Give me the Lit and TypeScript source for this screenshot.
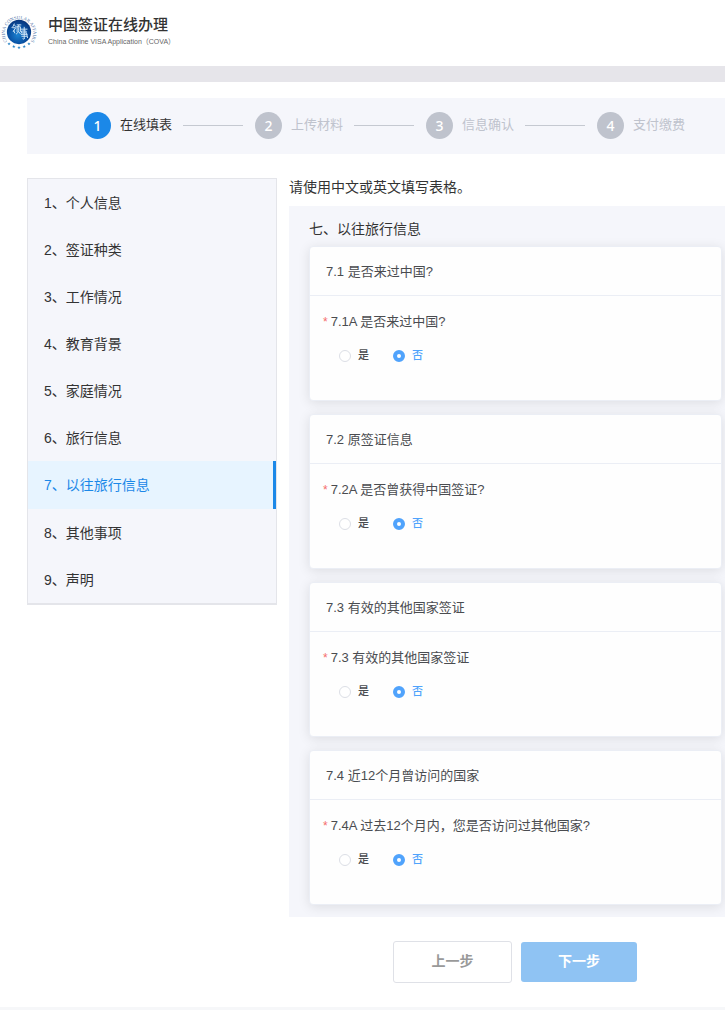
import { LitElement, html, css, svg } from "lit";
import { customElement, property, state } from "lit/decorators.js";
import { classMap } from "lit/directives/class-map.js";

const STEPS = ["在线填表", "上传材料", "信息确认", "支付缴费"];

const SECTIONS = [
  "个人信息", "签证种类", "工作情况", "教育背景", "家庭情况",
  "旅行信息", "以往旅行信息", "其他事项", "声明",
];

const QUESTIONS = [
  { id: "q1", title: "7.1 是否来过中国?", label: "7.1A 是否来过中国?" },
  { id: "q2", title: "7.2 原签证信息", label: "7.2A 是否曾获得中国签证?" },
  { id: "q3", title: "7.3 有效的其他国家签证", label: "7.3 有效的其他国家签证" },
  { id: "q4", title: "7.4 近12个月曾访问的国家", label: "7.4A 过去12个月内，您是否访问过其他国家?" },
];

const star = (x: number, y: number) => svg`
  <path fill="#2b86c8" transform="translate(${x} ${y}) scale(1.2)"
    d="M0-1.5 .4-.5 1.5-.5 .6.2 .9 1.3 0 .6-.9 1.3-.6.2-1.5-.5-.4-.5Z"/>`;

@customElement("cova-header")
class CovaHeader extends LitElement {
  static styles = css`
    :host { display: block; }
    .bar {
      display: flex;
      align-items: center;
      gap: 11px;
      height: 64px;
      padding: 0 1px 2px;
      border-bottom: 16px solid #e6e5ea;
    }
    .logo { width: 36px; height: 36px; flex: none; }
    .ring { font: 5px "Liberation Serif", serif; fill: #4a6fa5; }
    .name { margin: 0; font-size: 15px; line-height: 20px; font-weight: 500; color: #333; }
    .sub { margin: 0; font: 7px/14px "Liberation Sans", "Noto Sans CJK SC", sans-serif; color: #666; white-space: nowrap; }
  `;

  render() {
    return html`
      <header class="bar">
        <svg class="logo" viewBox="-1 -1 38 38" role="img" aria-label="领事">
          <defs>
            <radialGradient id="globe" cx="45%" cy="62%" r="62%">
              <stop offset="0" stop-color="#1d82d0" />
              <stop offset=".55" stop-color="#0b56a8" />
              <stop offset="1" stop-color="#07347b" />
            </radialGradient>
            <path id="arc" d="M5.200 27.200A15 15 0 1 1 30.800 27.200" />
          </defs>
          <circle cx="18" cy="18" r="12.800" fill="url(#globe)" />
          <text class="ring" text-anchor="middle"><textPath href="#arc" startOffset="50%">CHINA CONSULAR AFFAIRS</textPath></text>
          <g fill="none" stroke="#d5e9f9" stroke-linecap="round">
            <path d="M13 9.500c-.5 2-1.500 3-2.500 4M13 10.500l2 2M11.500 13.500h3l-2.500 4M12.500 16.500l1 2.500M16 10.500h4M18 10.500l-1 2M16 12.500h3.500v5M16 12.500v5M17.700 13.500v3c-.5 2-1.500 3-2.500 3.500M18 18l1.500 2" />
            <path d="M20 15h6.500M23.500 13v12M21 17h4.500v2h-4.500zM20.500 20.500h6M21 22.500h5M23.500 25c-.5.800-1 .800-1.500.300M26 19.500l1 4.500" />
          </g>
          ${star(7.5, 30.5)}${star(12.5, 33.3)}${star(18, 34.5)}${star(23.5, 33.3)}${star(28.5, 30.5)}
        </svg>
        <div>
          <h1 class="name">中国签证在线办理</h1>
          <p class="sub">China Online VISA Application（COVA）</p>
        </div>
      </header>
    `;
  }
}

@customElement("cova-steps")
class CovaSteps extends LitElement {
  static styles = css`
    :host { display: block; }
    .steps {
      display: flex;
      align-items: center;
      height: 54px;
      margin: 0;
      padding: 0 40px 2px 57px;
      list-style: none;
      background: #f5f6fb;
    }
    .step { display: flex; flex: 1 1 auto; align-items: center; gap: 9px; color: #bfc3cd; font-size: 13px; white-space: nowrap; }
    .step:last-child { flex: none; }
    .step::after { content: ""; flex: 1; height: 1px; margin: 0 12px 0 2px; background: #c5c9d1; }
    .step:last-child::after { display: none; }
    .dot {
      display: flex;
      align-items: center;
      justify-content: center;
      width: 27px;
      height: 27px;
      border-radius: 50%;
      background: #bfc3cd;
      color: #fff;
      font: 500 14px/27px "Noto Sans", sans-serif;
    }
    .current { color: #333; }
    .current .dot { background: #1b88e8; }
  `;

  render() {
    return html`
      <ol class="steps">
        ${STEPS.map((s, i) => html`
          <li class=${classMap({ step: true, current: i === 0 })}>
            <span class="dot">${i + 1}</span><span>${s}</span>
          </li>`)}
      </ol>
    `;
  }
}

@customElement("cova-question")
class CovaQuestion extends LitElement {
  @property() name = "";
  @property() heading = "";
  @property() label = "";
  @state() private answer = "否";

  static styles = css`
    :host { display: block; }
    .card {
      border: 1px solid #ebeef5;
      border-radius: 4px;
      background: #fefefe;
      box-shadow: 0 2px 12px rgba(0, 0, 0, 0.1);
      color: #4a4c50;
      font-size: 13px;
      line-height: 20px;
    }
    .heading { margin: 0; padding: 15px 16px 13px; border-bottom: 1px solid #ebeef5; font-size: 13px; font-weight: 400; }
    .group { margin: 0; padding: 16px 13px 35px; border: 0; }
    .label { float: left; width: 100%; padding: 0; }
    .star { margin-right: 3px; color: #f56c6c; font-size: 12px; }
    .options { clear: both; display: flex; gap: 24px; padding: 13px 0 0 16px; }
    .option { display: flex; align-items: center; gap: 7px; font-size: 11px; font-weight: 500; }
    .radio {
      appearance: none;
      box-sizing: border-box;
      width: 12px;
      height: 12px;
      margin: 1px 0 0;
      border: 1px solid #dcdfe6;
      border-radius: 50%;
      background: #fff;
    }
    .radio:checked { border: 4px solid #50a3fc; }
    .chosen { color: #50a3fc; }
  `;

  render() {
    return html`
      <section class="card">
        <h3 class="heading">${this.heading}</h3>
        <fieldset class="group">
          <legend class="label"><span class="star">*</span>${this.label}</legend>
          <div class="options">
            ${["是", "否"].map((o) => html`
              <label class=${classMap({ option: true, chosen: this.answer === o })}>
                <input class="radio" type="radio" name=${this.name} .value=${o}
                  .checked=${this.answer === o} @change=${() => (this.answer = o)} />
                ${o}
              </label>`)}
          </div>
        </fieldset>
      </section>
    `;
  }
}

@customElement("app-root")
class AppRoot extends LitElement {
  static styles = css`
    :host {
      display: block;
      background: #fff;
      color: #333;
      font-family: "Liberation Sans", "Noto Sans CJK SC", sans-serif;
      font-size: 14px;
      line-height: 20px;
    }
    .page { padding: 16px 0 24px 27px; }
    .columns { display: grid; grid-template-columns: 250px minmax(0, 1fr); gap: 12px; align-items: start; margin-top: 24px; }
    .menu { border: 1px solid #e4e5ea; border-bottom-width: 2px; background: #f5f6fb; }
    .item { display: flex; align-items: center; min-height: 47px; padding-left: 16px; color: #333; text-decoration: none; }
    .active { min-height: 48px; border-right: 3px solid #1b88e8; background: #e7f4ff; color: #1b88e8; }
    .notice { margin: 0; padding-bottom: 10px; line-height: 18px; }
    .panel { padding: 13px 3px 12px 20px; background: #f5f6fb; }
    .title { margin: 0; padding-bottom: 7px; font-size: 14px; font-weight: 400; }
    .cards { display: grid; gap: 13px; }
    .actions { display: flex; align-items: center; justify-content: center; gap: 9px; padding: 24px 0 0 16px; }
    .button {
      box-sizing: border-box;
      width: 116px;
      height: 40px;
      padding: 0 0 2px;
      border: 0;
      border-radius: 3px;
      background: #8fc3f3;
      color: #fff;
      font: 700 14px/20px "Liberation Sans", "Noto Sans CJK SC", sans-serif;
    }
    .plain { width: 119px; height: 42px; border: 1px solid #dfe1e7; background: #fff; color: #999; }
    .footer { height: 3px; background: #f6f7f9; }
  `;

  render() {
    return html`
      <cova-header></cova-header>
      <div class="page">
        <cova-steps></cova-steps>
        <div class="columns">
          <nav class="menu">
            ${SECTIONS.map((s, i) => html`
              <a class=${classMap({ item: true, active: i === 6 })} href="#">${i + 1}、${s}</a>`)}
          </nav>
          <main>
            <p class="notice">请使用中文或英文填写表格。</p>
            <div class="panel">
              <h2 class="title">七、以往旅行信息</h2>
              <div class="cards">
                ${QUESTIONS.map((q) => html`
                  <cova-question .name=${q.id} .heading=${q.title} .label=${q.label}></cova-question>`)}
              </div>
            </div>
            <div class="actions">
              <button class="button plain" type="button">上一步</button>
              <button class="button" type="button">下一步</button>
            </div>
          </main>
        </div>
      </div>
      <footer class="footer"></footer>
    `;
  }
}
